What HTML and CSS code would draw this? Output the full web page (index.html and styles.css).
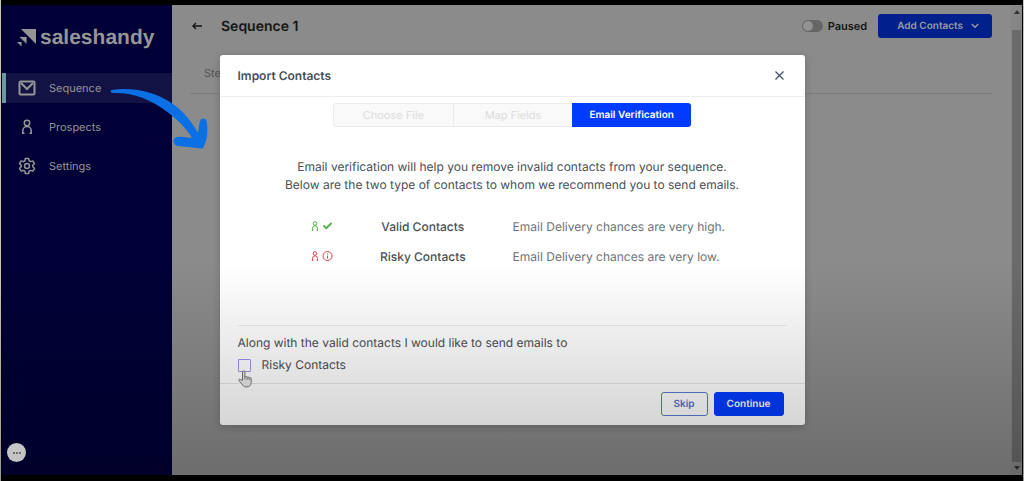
FILE: index.html
```html
<!doctype html>
<html lang="en">
<head>
    <meta charset="UTF-8">
    <meta name="viewport" content="width=device-width, initial-scale=1.0">
    <title>Saleshandy - Import Contacts</title>
    <link rel="stylesheet" href="styles.css">
</head>
<body>
    <div class="app">
        <aside class="sidebar">
            <a class="logo" href="#">
                <svg width="19" height="18" viewBox="0 0 19 18" fill="currentColor">
                    <path d="M4 0h15v15z"/>
                    <path d="M1.500 7.500h8.500v8z" stroke="#000036" stroke-width=".8"/>
                    <path d="M0 13h4.500v4.500z"/>
                </svg>
                <span>saleshandy</span>
            </a>
            <nav class="menu">
                <a class="menu-item active" href="#">
                    <svg width="18" height="16" viewBox="0 0 18 16" fill="none" stroke="currentColor" stroke-width="2">
                        <rect x="1.5" y="1.5" width="15" height="13" rx="1"/>
                        <path d="M3 3l6 6 6-6"/>
                    </svg>
                    <span>Sequence</span>
                </a>
                <a class="menu-item" href="#">
                    <svg width="18" height="16" viewBox="0 0 18 16" fill="none" stroke="currentColor" stroke-width="1.5">
                        <circle cx="9" cy="4" r="2.7"/>
                        <path d="M4.8 15v-3.3a4.2 4.2 0 0 1 8.4 0V15M4 14.3h2.5M11.500 14.300H14"/>
                    </svg>
                    <span>Prospects</span>
                </a>
                <a class="menu-item" href="#">
                    <svg width="18" height="18" viewBox="0 0 24 24" fill="none" stroke="currentColor" stroke-width="2" stroke-linejoin="round">
                        <path d="M9.800 2h4.400l.6 3 2 1.200 3-1 2.200 3.800-2.300 2v2l2.300 2-2.200 3.800-3-1-2 1.200-.6 3H9.800l-.6-3-2-1.200-3 1L2 15l2.300-2v-2L2 9l2.200-3.800 3 1 2-1.200z"/>
                        <circle cx="12" cy="12" r="3.300"/>
                    </svg>
                    <span>Settings</span>
                </a>
            </nav>
            <button class="chat-btn" aria-label="Open chat"><i></i><i></i><i></i></button>
        </aside>

        <main class="content">
            <header class="page-header">
                <a class="back" href="#" aria-label="Back">
                    <svg width="10" height="8" viewBox="0 0 10 8" fill="none" stroke="currentColor" stroke-width="1.4">
                        <path d="M10 4H1.200M4 1L1 4l3 3"/>
                    </svg>
                </a>
                <h1>Sequence 1</h1>
                <label class="toggle">
                    <input type="checkbox">
                    <span>Paused</span>
                </label>
                <button class="add-btn">
                    Add Contacts
                    <svg width="8" height="6" viewBox="0 0 8 6" fill="none" stroke="currentColor" stroke-width="1.4">
                        <path d="M.7 1L4 4.300 7.300 1"/>
                    </svg>
                </button>
            </header>
            <div class="tabs"><a href="#">Steps</a></div>
        </main>

        <div class="scrollbar">
            <svg width="6" height="4" viewBox="0 0 6 4"><path d="M3 0l3 4H0z"/></svg>
            <div class="scroll-thumb"></div>
            <svg width="6" height="4" viewBox="0 0 6 4"><path d="M0 0h6L3 4z"/></svg>
        </div>
    </div>

    <!-- Import dialog -->
    <div class="overlay">
        <div class="modal" role="dialog" aria-labelledby="modal-title">
            <div class="modal-header">
                <h2 id="modal-title">Import Contacts</h2>
                <button class="close-btn" aria-label="Close">
                    <svg width="9" height="9" viewBox="0 0 9 9" fill="none" stroke="currentColor" stroke-width="1.300">
                        <path d="M.5.5l8 8M8.500.5l-8 8"/>
                    </svg>
                </button>
            </div>

            <div class="modal-body">
                <div class="steps">
                    <button disabled>Choose File</button>
                    <button disabled>Map Fields</button>
                    <button class="current">Email Verification</button>
                </div>

                <p class="intro">
                    Email verification will help you remove invalid contacts from your sequence.<br>
                    Below are the two type of contacts to whom we recommend you to send emails.
                </p>

                <table class="types">
                    <tr class="valid">
                        <td>
                            <svg width="22" height="10" viewBox="0 0 22 10" fill="none" stroke="currentColor">
                                <circle cx="4" cy="2.500" r="1.800"/>
                                <path d="M1.500 9.500V7.500a2.500 2.700 0 0 1 5 0v2M.8 9.200h1.500M5.700 9.200h1.500"/>
                                <path d="M12.500 4.500l2.800 2.700L20.500 2" stroke-width="1.800"/>
                            </svg>
                        </td>
                        <th scope="row">Valid Contacts</th>
                        <td>Email Delivery chances are very high.</td>
                    </tr>
                    <tr class="risky">
                        <td>
                            <svg width="22" height="10" viewBox="0 0 22 10" fill="none" stroke="currentColor">
                                <circle cx="4" cy="2.500" r="1.800"/>
                                <path d="M1.500 9.500V7.500a2.500 2.700 0 0 1 5 0v2M.8 9.200h1.500M5.700 9.200h1.500"/>
                                <circle cx="16.500" cy="5" r="4.500"/>
                                <path d="M16.500 4.500v3M16.500 2.500v1"/>
                            </svg>
                        </td>
                        <th scope="row">Risky Contacts</th>
                        <td>Email Delivery chances are very low.</td>
                    </tr>
                </table>

                <div class="choice">
                    <p>Along with the valid contacts I would like to send emails to</p>
                    <label>
                        <input type="checkbox">
                        <span>Risky Contacts</span>
                    </label>
                    <svg class="hand" width="14" height="18" viewBox="0 0 14 18" fill="#e8e8e8" stroke="#777" stroke-linejoin="round">
                        <path d="M4.500 10.500V2a1.200 1.200 0 0 1 2.400 0v5a1.200 1.200 0 0 1 2.200.4 1.200 1.200 0 0 1 2.100.6 1.100 1.100 0 0 1 2 .8v3.700c0 2.500-1.700 4.500-4.700 4.500-2.700 0-3.700-1.500-4.700-3.200L1 10.800c-.8-1.400.8-2.200 1.700-1.200zM6.900 7v2.500M9.100 7.500v2.300M11.200 8v2"/>
                    </svg>
                </div>
            </div>

            <div class="modal-footer">
                <button class="skip-btn">Skip</button>
                <button class="continue-btn">Continue</button>
            </div>
        </div>
    </div>

    <div class="shade"></div>

    <svg class="pointer-arrow" width="100" height="62" viewBox="0 0 100 62" fill="#0b70e3">
        <path d="M2 2C20 -1 43 3 60 14C73 22 82 34 88 45C89 40 89 36 90 33C92 29 97 30 97 36C98 44 97 53 94 58C93 61 91 61 88 60L68 58C62 57 62 49 68 49C73 48 78 50 82 50C76 40 67 31 56 23C40 11 22 4 3 5C0 5 0 2 2 2Z"/>
    </svg>
</body>
</html>
```
FILE: styles.css
```css
* {
    box-sizing: border-box;
}

body {
    margin: 0;
    padding: 5px 1px 6px;
    min-height: 100vh;
    display: flex;
    background: #000;
    border: solid #c4c4c4;
    border-width: 0 1px;
    font-family: Inter, "Liberation Sans", sans-serif;
    font-size: 12px;
    text-rendering: geometricPrecision;
    color: #4a4f56;
}

h1, h2, p {
    margin: 0;
}

a {
    color: inherit;
    text-decoration: none;
}

button {
    font: inherit;
    text-rendering: inherit;
    cursor: pointer;
}

svg {
    display: block;
    flex: none;
}

.app {
    flex: 1;
    display: flex;
    background: #8b8b8b;
}

/* Sidebar */
.sidebar {
    width: 170px;
    display: flex;
    flex-direction: column;
    background: #000036;
    color: #959595;
}

.logo {
    display: flex;
    align-items: center;
    gap: 4px;
    padding: 18px 0 0 15px;
    font-family: "Liberation Sans", Arial, sans-serif;
    font-size: 21px;
    line-height: 30px;
    font-weight: bold;
}

.menu {
    display: flex;
    flex-direction: column;
    gap: 9px;
    margin-top: 20px;
}

.menu-item {
    display: flex;
    align-items: center;
    gap: 13px;
    height: 30px;
    padding-left: 16px;
    font-size: 11px;
}

.menu-item.active {
    background: #121244;
    border-left: 4px solid #7095a3;
    padding-left: 12px;
}

.chat-btn {
    display: flex;
    align-items: center;
    justify-content: center;
    gap: 1px;
    width: 19px;
    height: 19px;
    margin: auto 0 13px 5px;
    padding: 0;
    border: none;
    border-radius: 50%;
    background: #f4f4f4;
}

.chat-btn i {
    width: 2px;
    height: 2px;
    background: #888;
}

/* Page */
.content {
    flex: 1;
    padding: 9px 19px 0 18px;
}

.page-header {
    display: flex;
    align-items: center;
    color: #161616;
}

.page-header h1 {
    margin: 0 auto 0 19px;
    font-size: 14px;
    font-weight: 600;
}

.back {
    margin-left: 2px;
}

.toggle {
    display: flex;
    align-items: center;
    gap: 5px;
    margin-right: 11px;
    font-size: 11px;
    font-weight: 600;
}

.toggle input {
    appearance: none;
    width: 21px;
    height: 12px;
    margin: 0;
    padding: 1px;
    border-radius: 6px;
    background: #666;
}

.toggle input::before {
    content: "";
    display: block;
    width: 10px;
    height: 10px;
    border-radius: 50%;
    background: #929292;
}

.add-btn {
    display: flex;
    align-items: center;
    gap: 8px;
    height: 24px;
    padding: 0 13px 0 19px;
    border: none;
    border-radius: 3px;
    background: #00208c;
    color: #9a9aa6;
    font-size: 10px;
    font-weight: 600;
}

.tabs {
    margin-top: 28px;
    padding: 0 0 13px 14px;
    border-bottom: 1px solid #7c7c7c;
    font-size: 11px;
    line-height: 14px;
    color: #555;
}

.scrollbar {
    width: 11px;
    display: flex;
    flex-direction: column;
    align-items: center;
    gap: 11px;
    padding: 5px 0;
    background: #868686;
    fill: #333;
}

.scroll-thumb {
    flex: 1;
    width: 9px;
    margin: 5px 0 -7px;
    background: #6a6a6a;
}

/* Import dialog */
.overlay {
    position: absolute;
    inset: 0;
    display: flex;
    justify-content: center;
    align-items: flex-start;
    padding-top: 55px;
}

.modal {
    width: 585px;
    max-width: 90%;
    border-radius: 3px;
    background: #fff;
    box-shadow: 0 2px 8px rgba(0, 0, 0, 0.2);
}

.modal-header {
    display: flex;
    align-items: center;
    justify-content: space-between;
    height: 42px;
    padding: 0 18px;
    border-bottom: 1px solid #eee;
}

.modal-header h2 {
    font-size: 12px;
    font-weight: 600;
}

.close-btn {
    padding: 3px;
    border: none;
    background: none;
    color: #42526b;
}

.modal-body {
    padding: 6px 18px 9px;
}

.steps {
    display: flex;
    width: 358px;
    margin: 0 auto;
}

.steps button {
    flex: 1;
    height: 24px;
    padding: 0;
    border: 1px solid #ececec;
    border-right: none;
    background: #f9f9f9;
    color: #dcdcdc;
    font-size: 11px;
}

.steps button:first-child {
    border-radius: 3px 0 0 3px;
}

.steps .current {
    border: none;
    border-radius: 0 3px 3px 0;
    background: #003cff;
    color: #fff;
    font-size: 10px;
    font-weight: 600;
}

.intro {
    margin-top: 31px;
    line-height: 18px;
    text-align: center;
}

.types {
    margin: 17px auto 0;
    border-collapse: collapse;
}

.types td,
.types th {
    height: 30px;
    padding: 0;
    font-weight: 500;
}

.types td:first-child {
    padding-left: 12px;
}

.types th {
    padding: 0 47px;
}

.types td:last-child {
    font-weight: 400;
    color: #6d737a;
}

.valid td:first-child {
    color: #4fae46;
}

.risky td:first-child {
    color: #d5454f;
}

.choice {
    position: relative;
    margin-top: 54px;
    padding-top: 8px;
    border-top: 1px solid #ececec;
    line-height: 18px;
}

.choice label {
    display: flex;
    align-items: center;
    gap: 11px;
    margin-top: 4px;
}

.choice input {
    appearance: none;
    width: 13px;
    height: 13px;
    margin: 0;
    border: 1px solid #9a94ea;
    border-radius: 1px;
    background: #fff;
}

/* mouse pointer resting on the checkbox */
.hand {
    position: absolute;
    left: 0;
    top: 44px;
}

.modal-footer {
    display: flex;
    justify-content: flex-end;
    gap: 6px;
    padding: 8px 21px 9px;
    border-top: 1px solid #e6e6e6;
}

.modal-footer button {
    height: 24px;
    padding: 0 12px;
    border: 1px solid #003cff;
    border-radius: 3px;
    font-size: 10px;
    font-weight: 600;
}

.modal-footer .skip-btn {
    border-color: #5c7ad0;
    background: #fff;
    color: #5a70d0;
}

.modal-footer .continue-btn {
    background: #003cff;
    color: #fff;
}

/* darkening towards the bottom of the window */
.shade {
    position: absolute;
    inset: 0;
    background: linear-gradient(transparent 55%, rgba(0, 0, 0, 0.22));
    pointer-events: none;
}

.pointer-arrow {
    position: absolute;
    left: 110px;
    top: 88px;
}
```
